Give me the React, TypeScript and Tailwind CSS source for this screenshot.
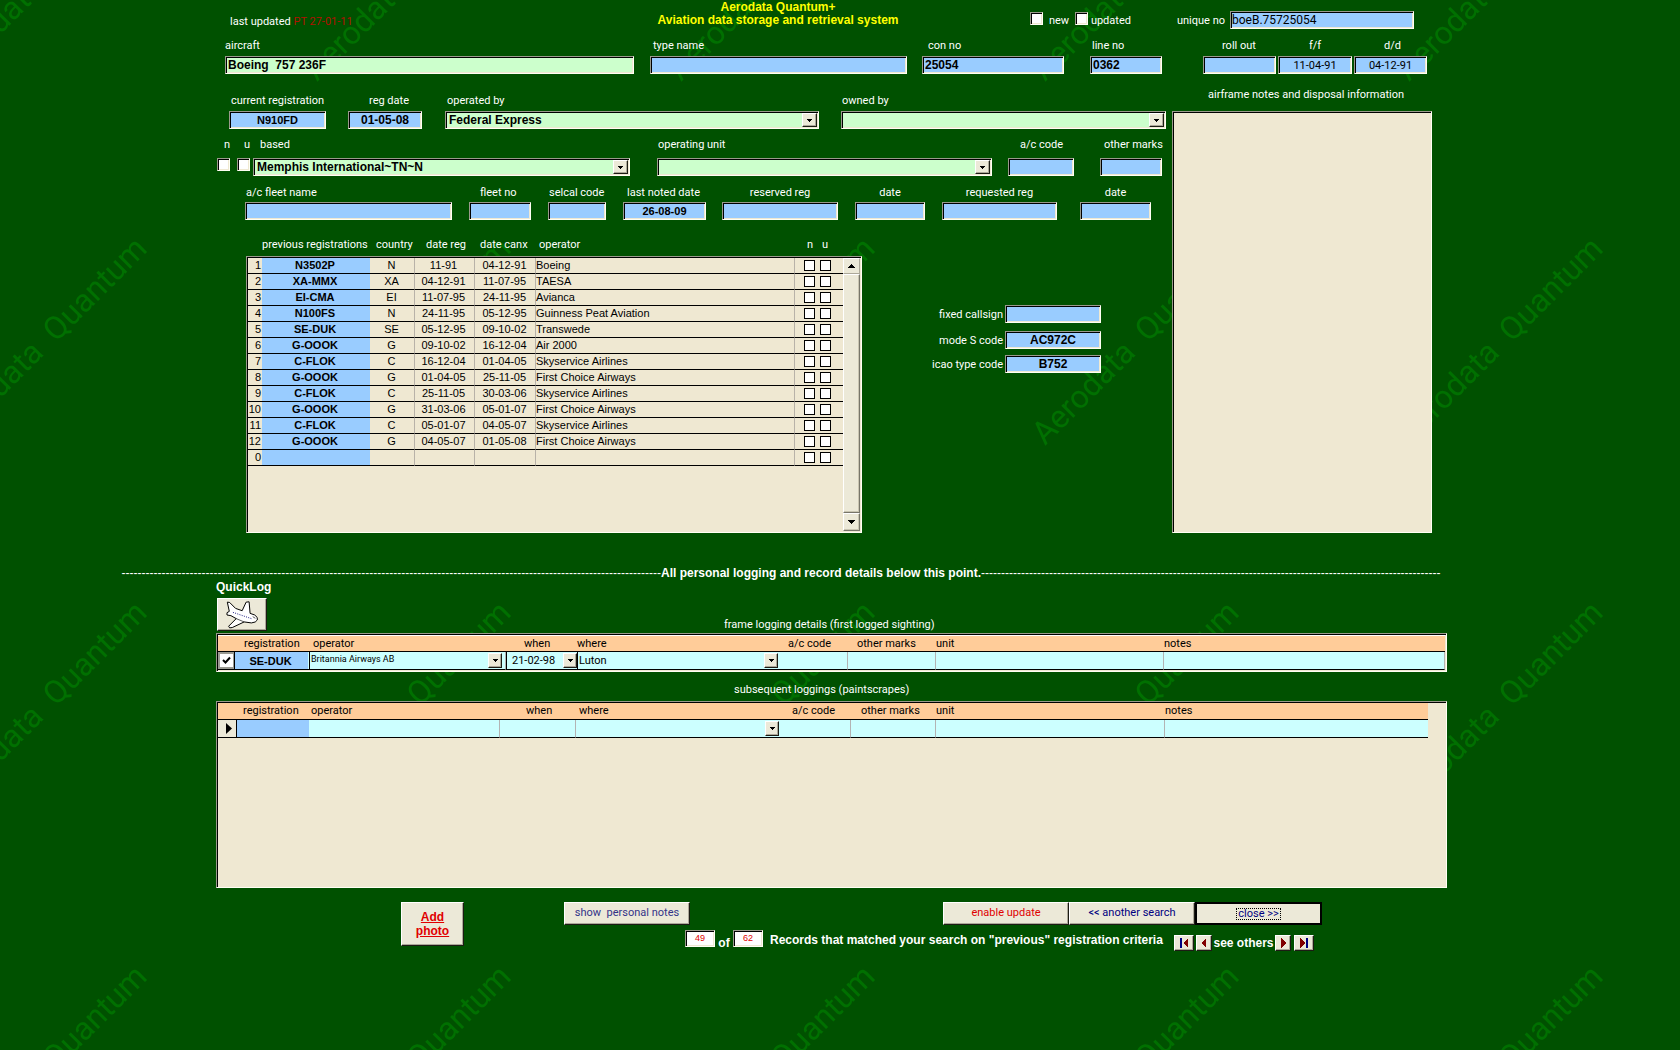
import { useId } from "react";
import type { ReactNode } from "react";
import { clsx } from "clsx";

const SUNKEN =
  "border border-t-[#9a9a8c] border-l-[#9a9a8c] border-r-[#fffff4] border-b-[#fffff4] shadow-[inset_1px_1px_0_#000,inset_-1px_-1px_0_#efe8d2]";
const RAISED =
  "border border-t-white border-l-white border-r-[#1c1c14] border-b-[#1c1c14] bg-[#ece9d8] shadow-[inset_-1px_-1px_0_#aca899]";
const LABEL = "block h-[14px] whitespace-nowrap text-[11px] leading-4";
const BOLD = "font-['Liberation_Sans',sans-serif] font-bold";

const PREVIOUS = [
  { no: 1, reg: "N3502P", country: "N", from: "11-91", to: "04-12-91", operator: "Boeing" },
  { no: 2, reg: "XA-MMX", country: "XA", from: "04-12-91", to: "11-07-95", operator: "TAESA" },
  { no: 3, reg: "EI-CMA", country: "EI", from: "11-07-95", to: "24-11-95", operator: "Avianca" },
  { no: 4, reg: "N100FS", country: "N", from: "24-11-95", to: "05-12-95", operator: "Guinness Peat Aviation" },
  { no: 5, reg: "SE-DUK", country: "SE", from: "05-12-95", to: "09-10-02", operator: "Transwede" },
  { no: 6, reg: "G-OOOK", country: "G", from: "09-10-02", to: "16-12-04", operator: "Air 2000" },
  { no: 7, reg: "C-FLOK", country: "C", from: "16-12-04", to: "01-04-05", operator: "Skyservice Airlines" },
  { no: 8, reg: "G-OOOK", country: "G", from: "01-04-05", to: "25-11-05", operator: "First Choice Airways" },
  { no: 9, reg: "C-FLOK", country: "C", from: "25-11-05", to: "30-03-06", operator: "Skyservice Airlines" },
  { no: 10, reg: "G-OOOK", country: "G", from: "31-03-06", to: "05-01-07", operator: "First Choice Airways" },
  { no: 11, reg: "C-FLOK", country: "C", from: "05-01-07", to: "04-05-07", operator: "Skyservice Airlines" },
  { no: 12, reg: "G-OOOK", country: "G", from: "04-05-07", to: "01-05-08", operator: "First Choice Airways" },
  { no: 0, reg: "", country: "", from: "", to: "", operator: "" },
];

function Watermark() {
  return (
    <svg className="absolute inset-0 h-full w-full" aria-hidden="true">
      <defs>
        <pattern id="wm" x="262" y="200" width="364" height="364" patternUnits="userSpaceOnUse">
          <text
            x="55"
            y="246"
            transform="rotate(-45 55 246)"
            fontSize="32"
            fill="#007000"
            className="font-['Roboto','Liberation_Sans',sans-serif]"
          >
            {"Aerodata\u00a0 Quantum"}
          </text>
        </pattern>
      </defs>
      <rect width="100%" height="100%" fill="url(#wm)" />
    </svg>
  );
}

function ArrowBox({ className = "h-[14px] w-[15px]" }: { className?: string }) {
  return (
    <span className={clsx(RAISED, "flex shrink-0 items-center justify-center", className)} aria-hidden="true">
      <svg width="5" height="3" viewBox="0 0 5 3" shapeRendering="crispEdges">
        <path d="M0 0h5v1h-1v1h-1v1h-1v-1h-1v-1h-1z" />
      </svg>
    </span>
  );
}

type FieldProps = {
  label: string;
  value?: string;
  className: string;
  labelClass?: string;
  inputClass?: string;
  gap?: string;
};

function Field({ label, value = "", className, labelClass, inputClass = "bg-[#99ccff]", gap = "gap-1" }: FieldProps) {
  const id = useId();
  return (
    <div className={clsx("flex flex-col", gap, className)}>
      <label htmlFor={id} className={clsx(LABEL, labelClass)}>{label}</label>
      <input id={id} defaultValue={value} className={clsx(SUNKEN, "h-[18px] w-full min-w-0 px-[2px] text-black outline-none", inputClass)} />
    </div>
  );
}

function Combo({ label, value = "", className, labelClass, gap = "gap-1" }: FieldProps) {
  const id = useId();
  return (
    <div className={clsx("flex flex-col", gap, className)}>
      <label htmlFor={id} className={clsx(LABEL, labelClass)}>{label}</label>
      <div className={clsx(SUNKEN, "flex h-[18px] items-center bg-[#ccffcc] pr-px")}>
        <select id={id} defaultValue={value} className={clsx(BOLD, "h-full min-w-0 flex-1 appearance-none bg-transparent pl-[3px] text-xs leading-4 text-black outline-none")}>
          <option value={value}>{value}</option>
        </select>
        <ArrowBox />
      </div>
    </div>
  );
}

function Tick({ label }: { label: string }) {
  return (
    <input
      type="checkbox"
      aria-label={label}
      className={clsx(SUNKEN, "block h-[13px] w-[13px] shrink-0 appearance-none bg-white")}
    />
  );
}

function PreviousRegistrations() {
  const line = "border-r border-r-[#b8b2a8]";
  return (
    <section className="w-[616px] shrink-0">
      <div className="flex h-[14px] text-[11px] leading-4 whitespace-nowrap">
        <span className="ml-4 w-[114px]">previous registrations</span>
        <span className="w-[50px]">country</span>
        <span className="w-[54px]">date reg</span>
        <span className="w-[59px]">date canx</span>
        <span className="w-[268px]">operator</span>
        <span className="w-[15px]">n</span>
        <span>u</span>
      </div>
      <div className={clsx(SUNKEN, "mt-[5px] flex h-[277px] bg-[#efe8d2] p-px")}>
        <div className="min-w-0 flex-1">
          <table
            aria-label="previous registrations"
            className="w-full table-fixed border-separate border-spacing-0 font-['Liberation_Sans',sans-serif] text-[11px] leading-[15px] text-black"
          >
            <colgroup>
              <col className="w-[14px]" />
              <col className="w-[108px]" />
              <col className="w-[45px]" />
              <col className="w-[60px]" />
              <col className="w-[61px]" />
              <col />
              <col className="w-[48px]" />
            </colgroup>
            <tbody>
              {PREVIOUS.map((row) => (
                <tr key={row.no} className="h-4 [&>td]:border-b [&>td]:border-b-black">
                  <td className="p-0 pr-px text-right">{row.no}</td>
                  <td className="bg-[#99ccff] p-0 pr-[2px] text-center font-bold">{row.reg}</td>
                  <td className={clsx(line, "p-0 pr-px text-center")}>{row.country}</td>
                  <td className={clsx(line, "p-0 pr-[2px] text-center")}>{row.from}</td>
                  <td className={clsx(line, "p-0 pr-px text-center")}>{row.to}</td>
                  <td className={clsx(line, "p-0")}>{row.operator}</td>
                  <td className="p-0">
                    <div className="flex gap-[5px] pl-[9px]">
                      <input type="checkbox" aria-label={`new ${row.no}`} className="h-[11px] w-[11px] appearance-none border border-black bg-white" />
                      <input type="checkbox" aria-label={`updated ${row.no}`} className="h-[11px] w-[11px] appearance-none border border-black bg-white" />
                    </div>
                  </td>
                </tr>
              ))}
            </tbody>
          </table>
        </div>
        <div className="flex w-[17px] flex-col bg-[#ece9d8]">
          <button aria-label="scroll up" className="flex h-4 items-center justify-center border border-t-white border-r-[#aca899] border-b-[#aca899] border-l-white">
            <svg width="7" height="4" viewBox="0 0 7 4" shapeRendering="crispEdges"><path d="M3 0h1v1h1v1h1v1h1v1h-7v-1h1v-1h1v-1h1z" /></svg>
          </button>
          <div className="flex-1 border border-t-white border-r-[#77756a] border-b-[#77756a] border-l-white shadow-[inset_-1px_-1px_0_#c9c5b2]" />
          <button aria-label="scroll down" className="flex h-[18px] items-center justify-center border border-t-white border-r-[#77756a] border-b-[#77756a] border-l-white shadow-[inset_-1px_-1px_0_#c9c5b2]">
            <svg width="7" height="4" viewBox="0 0 7 4" shapeRendering="crispEdges"><path d="M0 0h7v1h-1v1h-1v1h-1v1h-1v-1h-1v-1h-1v-1h-1z" /></svg>
          </button>
        </div>
      </div>
    </section>
  );
}

function CodeField({ label, value = "", className }: { label: string; value?: string; className?: string }) {
  const id = useId();
  return (
    <div className={clsx("flex items-center justify-end gap-[2px]", className)}>
      <label htmlFor={id} className={LABEL}>{label}</label>
      <input id={id} defaultValue={value} className={clsx(SUNKEN, BOLD, "h-[18px] w-[96px] bg-[#99ccff] text-center text-xs text-black")} />
    </div>
  );
}

function LogHead({ subsequent }: { subsequent?: boolean }) {
  const cell = "p-0 text-left font-normal";
  return (
    <thead>
      <tr className={clsx("bg-[#ffcc99] [&>*]:border-b [&>*]:border-b-black", subsequent ? "h-[17px]" : "h-4")}>
        <td className="p-0" />
        <th className={clsx(cell, subsequent ? "pl-[6px]" : "pl-[9px]")}>registration</th>
        <th className={clsx(cell, subsequent ? "pl-[2px]" : "pl-[5px]")}>operator</th>
        <th className={clsx(cell, subsequent ? "pl-[26px]" : "pl-[19px]")}>when</th>
        <th className={clsx(cell, subsequent && "pl-[3px]")}>where</th>
        <th className={clsx(cell, subsequent ? "pl-[13px]" : "pl-[8px]")}>a/c code</th>
        <th className={clsx(cell, subsequent ? "pl-[10px]" : "pl-[9px]")}>other marks</th>
        <th className={cell}>unit</th>
        <th className={cell}>notes</th>
      </tr>
    </thead>
  );
}

const LOG_TABLE = "w-full table-fixed border-separate border-spacing-0 text-[11px] leading-[14px] text-black";
const CELL_INPUT = "block h-[17px] w-full min-w-0 bg-transparent text-black outline-none";

function CellCombo({ label, value = "", textClass = "pl-px text-[11px]", className }: { label: string; value?: string; textClass?: string; className?: string }) {
  return (
    <div className={clsx("flex h-[17px] items-center", className)}>
      <select aria-label={label} defaultValue={value} className={clsx("h-full min-w-0 flex-1 appearance-none bg-transparent text-black outline-none", textClass)}>
        <option value={value}>{value}</option>
      </select>
      <ArrowBox className="h-[15px] w-[14px]" />
    </div>
  );
}

function FirstLogging() {
  const line = "border-r border-r-[#b3b3b3] p-0";
  return (
    <div className={clsx(SUNKEN, "mt-[2px] bg-white px-px pt-[2px] pb-px")}>
      <table aria-label="frame logging details" className={LOG_TABLE}>
        <colgroup>
          <col className="w-[17px]" />
          <col className="w-[73px]" />
          <col className="w-[197px]" />
          <col className="w-[72px]" />
          <col className="w-[203px]" />
          <col className="w-[68px]" />
          <col className="w-[88px]" />
          <col className="w-[228px]" />
          <col />
        </colgroup>
        <LogHead />
        <tbody>
          <tr className="h-[18px] bg-[#ccffff] [&>td]:border-b [&>td]:border-b-black">
            <td className="border-r border-r-black bg-[#9a9a92] p-0">
              <label className="mx-auto flex h-[13px] w-[13px] items-center justify-center bg-white">
                <input type="checkbox" defaultChecked aria-label="logged" className="peer h-0 w-0 appearance-none" />
                <svg width="9" height="9" viewBox="0 0 9 9" className="invisible peer-checked:visible">
                  <path d="M1 4L3.5 6.500L8 1.500" fill="none" stroke="#000" strokeWidth="2" />
                </svg>
              </label>
            </td>
            <td className="bg-[#99ccff] p-0">
              <input aria-label="registration" defaultValue="SE-DUK" className={clsx(CELL_INPUT, BOLD, "pr-[2px] text-center text-[11px]")} />
            </td>
            <td className="p-0">
              <CellCombo label="operator" value="Britannia Airways AB" textClass="pb-[3px] pl-px text-[9px]" className="mr-[3px] ml-px border-l border-black" />
            </td>
            <td className="border-l border-l-[#b3b3b3] p-0">
              <CellCombo label="when" value="21-02-98" textClass="pl-[5px] text-[11px]" className="border-l border-black" />
            </td>
            <td className="border-l border-l-black p-0">
              <CellCombo label="where" value="Luton" className="mr-[2px]" />
            </td>
            <td className={line}><input aria-label="a/c code" className={CELL_INPUT} /></td>
            <td className={line}><input aria-label="other marks" className={CELL_INPUT} /></td>
            <td className={line}><input aria-label="unit" className={CELL_INPUT} /></td>
            <td className={line}><input aria-label="notes" className={CELL_INPUT} /></td>
          </tr>
        </tbody>
      </table>
    </div>
  );
}

function SubsequentLoggings() {
  const line = "border-r border-r-[#b3b3b3] p-0";
  return (
    <div className={clsx(SUNKEN, "mt-[5px] h-[187px] bg-[#efe8d2] py-px pr-[18px] pl-px")}>
      <table aria-label="subsequent loggings" className={LOG_TABLE}>
        <colgroup>
          <col className="w-[19px]" />
          <col className="w-[72px]" />
          <col className="w-[191px]" />
          <col className="w-[76px]" />
          <col className="w-[203px]" />
          <col className="w-[72px]" />
          <col className="w-[85px]" />
          <col className="w-[229px]" />
          <col />
        </colgroup>
        <LogHead subsequent />
        <tbody>
          <tr className="h-[18px] bg-[#ccffff] [&>td]:border-b [&>td]:border-b-black">
            <td className="border-r border-r-black bg-[#ece9d8] p-0">
              <svg width="6" height="11" viewBox="0 0 6 11" className="ml-[8px]"><path d="M0 0L6 5.500L0 11z" /></svg>
            </td>
            <td className="bg-[#99ccff] p-0"><input aria-label="registration" className={CELL_INPUT} /></td>
            <td className={line}><input aria-label="operator" className={CELL_INPUT} /></td>
            <td className={line}><input aria-label="when" className={CELL_INPUT} /></td>
            <td className="p-0"><CellCombo label="where" /></td>
            <td className={line}><input aria-label="a/c code" className={CELL_INPUT} /></td>
            <td className={line}><input aria-label="other marks" className={CELL_INPUT} /></td>
            <td className={line}><input aria-label="unit" className={CELL_INPUT} /></td>
            <td className="p-0"><input aria-label="notes" className={CELL_INPUT} /></td>
          </tr>
        </tbody>
      </table>
    </div>
  );
}

function NavButton({ label, className, children }: { label: string; className: string; children: ReactNode }) {
  return (
    <button aria-label={label} className={clsx(RAISED, "flex h-4 items-center justify-center", className)}>
      <svg width="10" height="10" viewBox="0 0 10 10" shapeRendering="crispEdges">{children}</svg>
    </button>
  );
}

export default function App() {
  return (
    <main className="relative min-h-screen bg-[#005100] pr-[233px] pb-8 pl-[216px] font-['Roboto','Liberation_Sans',sans-serif] text-white">
      <Watermark />

      <div className="relative">
        <header className="flex h-[38px] text-[11px] leading-[14px] whitespace-nowrap">
          <div className="mt-[15px] ml-[14px] w-[390px]">
            last updated <span className="text-[#b01000]">PT 27-01-11</span>
          </div>
          <h1 className={clsx(BOLD, "mt-px w-[316px] text-center text-xs leading-[13px] text-[#ffff00]")}>
            Aerodata Quantum+
            <br />
            Aviation data storage and retrieval system
          </h1>
          <div className="mt-[12px] ml-auto flex h-[14px]">
            <Tick label="new" />
            <span className="mt-[2px] ml-[6px] w-[26px]">new</span>
            <Tick label="updated" />
            <span className="mt-[2px] ml-[3px]">updated</span>
          </div>
          <div className="mt-[11px] mr-[33px] ml-[46px] flex">
            <label htmlFor="unique" className="mt-[3px] mr-[5px]">unique no</label>
            <input id="unique" defaultValue="boeB.75725054" className={clsx(SUNKEN, "h-[18px] w-[184px] bg-[#99ccff] px-px text-xs text-black")} />
          </div>
        </header>

        <div className="flex pl-[9px]">
          <Field label="aircraft" value="Boeing  757 236F" className="min-w-0 flex-1" inputClass={clsx(BOLD, "bg-[#ccffcc] text-xs")} />
          <Field label="type name" className="ml-[16px] w-[257px]" labelClass="pl-[3px]" />
          <Field label="con no" value="25054" className="ml-[15px] w-[142px]" labelClass="pl-[6px]" inputClass={clsx(BOLD, "bg-[#99ccff] text-xs")} />
          <Field label="line no" value="0362" className="ml-[26px] w-[72px]" labelClass="pl-[2px]" inputClass={clsx(BOLD, "bg-[#99ccff] text-xs")} />
          <Field label="roll out" className="ml-[41px] w-[73px]" labelClass="pl-[19px]" />
          <Field label="f/f" value="11-04-91" className="ml-[2px] w-[74px]" labelClass="text-center" inputClass="bg-[#99ccff] text-center text-[11px]" />
          <Field label="d/d" value="04-12-91" className="mr-[20px] ml-[2px] w-[73px]" labelClass="pl-[4px] text-center" inputClass="bg-[#99ccff] text-center text-[11px]" />
        </div>

        <div className="mt-[13px] flex pr-[15px]">
          <div className="min-w-0 flex-1 pt-[6px] pr-[6px]">
            <div className="flex pl-[13px]">
              <Field label="current registration" value="N910FD" className="w-[97px]" labelClass="text-center" inputClass={clsx(BOLD, "bg-[#99ccff] text-center text-[11px]")} />
              <Field label="reg date" value="01-05-08" className="ml-[22px] w-[74px]" labelClass="pl-[21px]" inputClass={clsx(BOLD, "bg-[#99ccff] text-center text-xs")} />
              <Combo label="operated by" value="Federal Express" className="ml-[23px] w-[374px]" labelClass="pl-[2px]" />
              <Combo label="owned by" className="ml-[22px] min-w-0 flex-1" labelClass="pl-px" />
            </div>

            <div className="mt-2 flex">
              <div className="flex w-[20px] flex-col gap-[7px] pl-px">
                <span className={clsx(LABEL, "pl-[7px]")}>n</span>
                <Tick label="n" />
              </div>
              <div className="flex w-[17px] flex-col gap-[7px] pl-px">
                <span className={clsx(LABEL, "pl-[7px]")}>u</span>
                <Tick label="u" />
              </div>
              <Combo label="based" value="Memphis International~TN~N" className="w-[377px]" labelClass="pl-[7px]" gap="gap-[7px]" />
              <Combo label="operating unit" className="ml-[27px] min-w-0 flex-1" labelClass="pl-px" gap="gap-[7px]" />
              <Field label="a/c code" className="ml-[16px] w-[66px]" labelClass="pl-[12px]" gap="gap-[7px]" />
              <Field label="other marks" className="mr-[4px] ml-[26px] w-[62px]" labelClass="pl-[4px]" gap="gap-[7px]" />
            </div>

            <div className="mt-[9px] flex pl-[29px]">
              <Field label="a/c fleet name" className="w-[207px]" labelClass="pl-px" gap="gap-[3px]" />
              <Field label="fleet no" className="ml-[17px] w-[62px]" labelClass="pl-[11px]" gap="gap-[3px]" />
              <Field label="selcal code" className="ml-[17px] w-[58px]" labelClass="pl-px" gap="gap-[3px]" />
              <Field label="last noted date" value="26-08-09" className="ml-[17px] w-[83px]" labelClass="pl-[4px]" inputClass={clsx(BOLD, "bg-[#99ccff] text-center text-[11px]")} gap="gap-[3px]" />
              <Field label="reserved reg" className="ml-[16px] w-[116px]" labelClass="text-center" gap="gap-[3px]" />
              <Field label="date" className="ml-[17px] w-[70px]" labelClass="text-center" gap="gap-[3px]" />
              <Field label="requested reg" className="ml-[17px] w-[115px]" labelClass="text-center" gap="gap-[3px]" />
              <Field label="date" className="ml-[23px] w-[71px]" labelClass="text-center" gap="gap-[3px]" />
            </div>

            <div className="mt-[17px] flex pl-[30px]">
              <PreviousRegistrations />
              <div className="flex w-[239px] flex-col pt-[68px]">
                <CodeField label="fixed callsign" />
                <CodeField label="mode S code" value="AC972C" className="mt-2" />
                <CodeField label="icao type code" value="B752" className="mt-[6px]" />
              </div>
            </div>
          </div>

          <div className="flex w-[260px] shrink-0 flex-col">
            <label htmlFor="notes" className={clsx(LABEL, "pl-9")}>airframe notes and disposal information</label>
            <textarea id="notes" className={clsx(SUNKEN, "mt-[10px] w-full flex-1 resize-none bg-[#efe8d2] text-black")} />
          </div>
        </div>

        <div className="mt-[33px] mr-[3px] -ml-[97px] flex h-[14px] font-['Liberation_Sans',sans-serif] text-xs leading-[14px] whitespace-nowrap">
          <span className="w-[542px] text-right" aria-hidden="true">{"-".repeat(135)}</span>
          <strong>All personal logging and record details below this point.</strong>
          <span className="min-w-0 flex-1" aria-hidden="true">{"-".repeat(115)}</span>
        </div>

        <div className="flex items-end">
          <div className="w-[508px]">
            <div className={clsx(BOLD, "h-[14px] text-xs leading-[14px]")}>QuickLog</div>
            <button aria-label="QuickLog" className={clsx(RAISED, "mt-1 ml-px flex h-[33px] w-[50px] items-center justify-center")}>
              <svg width="33" height="28" viewBox="43 35 100 84">
                <path
                  d="M47 38L54 39L72 57L92 64L104 38L113 37L116 72L130 77Q141 84 138 92Q134 100 120 101L98 98L62 115L54 116L51 111L74 88L58 79L46 77L46 70L53 66z"
                  fill="#fff"
                  stroke="#000"
                  strokeWidth="3"
                  strokeLinejoin="round"
                />
                <path d="M64 69L120 88" stroke="#1b1b80" strokeWidth="3" strokeDasharray="3 4" />
                <path d="M74 88L98 98M124 82l8 5" fill="none" stroke="#000" strokeWidth="2" />
              </svg>
            </button>
          </div>
          <div className={LABEL}>frame logging details (first logged sighting)</div>
        </div>
        <FirstLogging />

        <div className={clsx(LABEL, "mt-[10px] pl-[518px]")}>subsequent loggings (paintscrapes)</div>
        <SubsequentLoggings />

        <footer className="mt-[14px] flex pl-[185px]">
          <button className={clsx(RAISED, BOLD, "h-[44px] w-[63px] text-xs leading-[14px] text-[#e00000] underline")}>
            Add<br />photo
          </button>
          <div className="ml-[100px]">
            <div className="flex h-[23px] text-[11px]">
              <button className={clsx(RAISED, "w-[126px] whitespace-pre text-[#333388]")}>{"show  personal notes"}</button>
              <button className={clsx(RAISED, "ml-[253px] w-[126px] text-[#e00000]")}>enable update</button>
              <button className={clsx(RAISED, "w-[126px] text-[#000080]")}>{"<< another search"}</button>
              <button className="flex w-[127px] items-center justify-center border-2 border-black bg-[#ece9d8] text-[#000080]">
                <span className="border border-dotted border-black px-px leading-[10px]">{"close >>"}</span>
              </button>
            </div>
            <div className={clsx(BOLD, "mt-[5px] flex pl-[121px] text-xs leading-[14px] whitespace-nowrap")}>
              <input aria-label="record" defaultValue="49" className={clsx(SUNKEN, "h-[17px] w-[30px] bg-white pb-[2px] text-center text-[9px] font-normal text-[#e00000]")} />
              <span className="mt-[6px] w-[18px] text-center">of</span>
              <input aria-label="total" defaultValue="62" className={clsx(SUNKEN, "h-[17px] w-[30px] bg-white pb-[2px] text-center text-[9px] font-normal text-[#e00000]")} />
              <span className="mt-[3px] ml-[7px] w-[404px]">Records that matched your search on "previous" registration criteria</span>
              <div className="mt-[5px] flex">
                <NavButton label="first" className="w-[20px]">
                  <path d="M1 0h2v10h-2z" fill="#000080" />
                  <path d="M9 0v10l-5-5z" fill="#800000" />
                </NavButton>
                <NavButton label="previous" className="ml-[2px] w-[16px]"><path d="M7 0v10l-5-5z" fill="#800000" /></NavButton>
                <span className="mt-px w-[63px] text-center">see others</span>
                <NavButton label="next" className="w-[16px]"><path d="M3 0v10l5-5z" fill="#800000" /></NavButton>
                <NavButton label="last" className="ml-[3px] w-[20px]">
                  <path d="M7 0h2v10h-2z" fill="#000080" />
                  <path d="M1 0v10l5-5z" fill="#800000" />
                </NavButton>
              </div>
            </div>
          </div>
        </footer>
      </div>
    </main>
  );
}
